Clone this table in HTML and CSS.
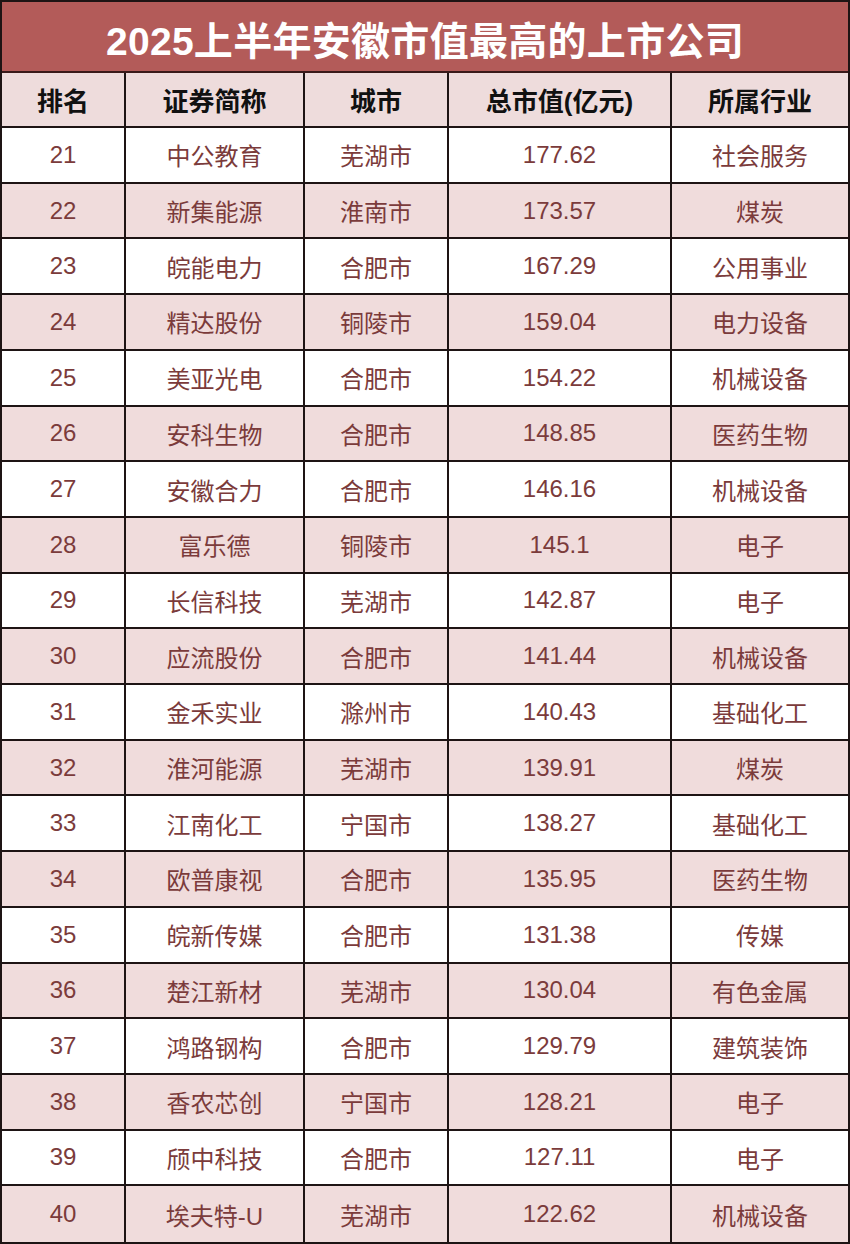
FILE: index.html
```html
<!DOCTYPE html>
<html lang="zh-CN">
<head>
<meta charset="utf-8">
<link rel="stylesheet" href="styles.css">
<title>2025上半年安徽市值最高的上市公司</title>
</head>
<body>
<div class="sheet">
  <div class="title">2025上半年安徽市值最高的上市公司</div>
  <div class="cell head">排名</div><div class="cell head">证券简称</div><div class="cell head">城市</div><div class="cell head">总市值(亿元)</div><div class="cell head last">所属行业</div>

  <div class="cell">21</div><div class="cell">中公教育</div><div class="cell">芜湖市</div><div class="cell">177.62</div><div class="cell last">社会服务</div>
  <div class="cell alt">22</div><div class="cell alt">新集能源</div><div class="cell alt">淮南市</div><div class="cell alt">173.57</div><div class="cell alt last">煤炭</div>
  <div class="cell">23</div><div class="cell">皖能电力</div><div class="cell">合肥市</div><div class="cell">167.29</div><div class="cell last">公用事业</div>
  <div class="cell alt">24</div><div class="cell alt">精达股份</div><div class="cell alt">铜陵市</div><div class="cell alt">159.04</div><div class="cell alt last">电力设备</div>
  <div class="cell">25</div><div class="cell">美亚光电</div><div class="cell">合肥市</div><div class="cell">154.22</div><div class="cell last">机械设备</div>
  <div class="cell alt">26</div><div class="cell alt">安科生物</div><div class="cell alt">合肥市</div><div class="cell alt">148.85</div><div class="cell alt last">医药生物</div>
  <div class="cell">27</div><div class="cell">安徽合力</div><div class="cell">合肥市</div><div class="cell">146.16</div><div class="cell last">机械设备</div>
  <div class="cell alt">28</div><div class="cell alt">富乐德</div><div class="cell alt">铜陵市</div><div class="cell alt">145.1</div><div class="cell alt last">电子</div>
  <div class="cell">29</div><div class="cell">长信科技</div><div class="cell">芜湖市</div><div class="cell">142.87</div><div class="cell last">电子</div>
  <div class="cell alt">30</div><div class="cell alt">应流股份</div><div class="cell alt">合肥市</div><div class="cell alt">141.44</div><div class="cell alt last">机械设备</div>
  <div class="cell">31</div><div class="cell">金禾实业</div><div class="cell">滁州市</div><div class="cell">140.43</div><div class="cell last">基础化工</div>
  <div class="cell alt">32</div><div class="cell alt">淮河能源</div><div class="cell alt">芜湖市</div><div class="cell alt">139.91</div><div class="cell alt last">煤炭</div>
  <div class="cell">33</div><div class="cell">江南化工</div><div class="cell">宁国市</div><div class="cell">138.27</div><div class="cell last">基础化工</div>
  <div class="cell alt">34</div><div class="cell alt">欧普康视</div><div class="cell alt">合肥市</div><div class="cell alt">135.95</div><div class="cell alt last">医药生物</div>
  <div class="cell">35</div><div class="cell">皖新传媒</div><div class="cell">合肥市</div><div class="cell">131.38</div><div class="cell last">传媒</div>
  <div class="cell alt">36</div><div class="cell alt">楚江新材</div><div class="cell alt">芜湖市</div><div class="cell alt">130.04</div><div class="cell alt last">有色金属</div>
  <div class="cell">37</div><div class="cell">鸿路钢构</div><div class="cell">合肥市</div><div class="cell">129.79</div><div class="cell last">建筑装饰</div>
  <div class="cell alt">38</div><div class="cell alt">香农芯创</div><div class="cell alt">宁国市</div><div class="cell alt">128.21</div><div class="cell alt last">电子</div>
  <div class="cell">39</div><div class="cell">颀中科技</div><div class="cell">合肥市</div><div class="cell">127.11</div><div class="cell last">电子</div>
  <div class="cell alt bottom">40</div><div class="cell alt bottom">埃夫特-U</div><div class="cell alt bottom">芜湖市</div><div class="cell alt bottom">122.62</div><div class="cell alt last bottom">机械设备</div>
</div>
</body>
</html>
```
FILE: styles.css
```css
html, body {
  margin: 0;
  padding: 0;
  background: #ffffff;
}

.sheet {
  box-sizing: border-box;
  width: 850px;
  height: 1244px;
  border: 2px solid #1e1414;
  display: grid;
  grid-template-columns: 124px 179px 144px 223px 176px;
  grid-template-rows: 71px 55px repeat(20, 1fr);
  font-family: "Liberation Sans", "Noto Sans CJK SC", sans-serif;
}

.title {
  grid-column: 1 / -1;
  box-sizing: border-box;
  background: #b35b59;
  color: #ffffff;
  font-weight: 700;
  font-size: 39px;
  letter-spacing: 0.3px;
  display: flex;
  align-items: center;
  justify-content: center;
  border-bottom: 2px solid #3a1a1a;
  padding-top: 2px;
}

.cell {
  box-sizing: border-box;
  display: flex;
  align-items: center;
  justify-content: center;
  border-right: 2px solid #1e1414;
  border-bottom: 2px solid #1e1414;
  background: #ffffff;
  color: #7b3b3b;
  font-size: 24px;
}

.cell.alt {
  background: #f0dcdc;
}

.cell.head {
  background: #eedcdc;
  color: #111111;
  font-weight: 700;
  font-size: 26px;
}

.cell.last {
  border-right: none;
}

.cell.bottom {
  border-bottom: none;
}
```
